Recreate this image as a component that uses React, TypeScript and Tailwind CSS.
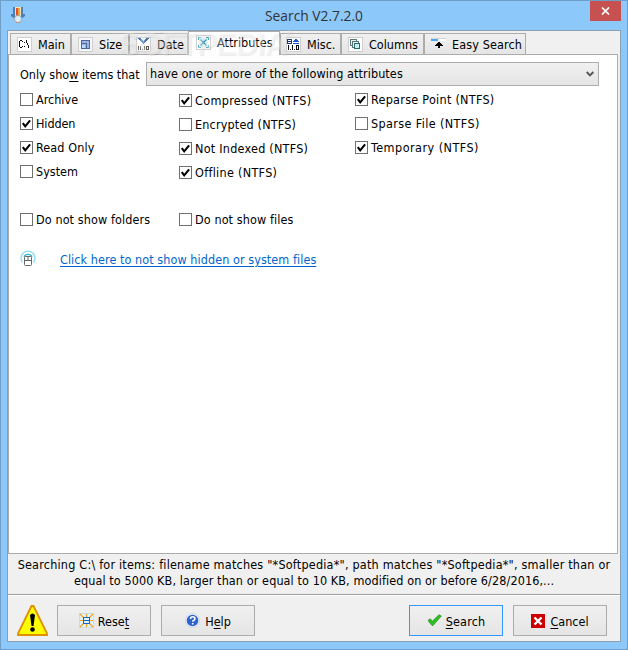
import type { ReactNode } from "react";
import clsx from "clsx";

const PromptIcon = () => (
  <svg width="15" height="15" viewBox="0 0 15 15" shapeRendering="crispEdges">
    <rect x=".5" y=".5" width="14" height="14" fill="#fff" stroke="#cfcfcf" />
    <path d="M3 3h2v1H3zM5 4h1v1H5zM2 4h1v6H2zM3 10h2v1H3zM5 9h1v1H5zM7 5h1v1H7zM7 9h1v1H7zM9 3h1v3H9zM10 6h1v2h-1zM11 8h1v3h-1z" fill="#111" />
  </svg>
);

const SizeIcon = () => (
  <svg width="15" height="15" viewBox="0 0 15 15" shapeRendering="crispEdges">
    <rect x=".5" y=".5" width="14" height="14" fill="#f4f8fc" stroke="#cfcfcf" />
    <rect x="3.500" y="3.500" width="8" height="8" fill="#9fb5e0" stroke="#4a649f" />
    <path d="M4 6.500h4.500V11" fill="none" stroke="#4a649f" />
    <rect x="4" y="8" width="3" height="3" fill="#b8dcff" />
  </svg>
);

const DateIcon = () => (
  <svg width="15" height="15" viewBox="0 0 15 15" shapeRendering="crispEdges">
    <rect x=".5" y=".5" width="14" height="14" fill="#fff" stroke="#cfcfcf" />
    <path d="M2 1h3l2.500 3L10 1h3L8 7H7z" fill="#3c76c0" />
    <path d="M2 9h1v4H2zM4 9h1v4H4zM6 12h1v1H6zM8 9h1v4H8zM10 9h3v4h-3z" fill="#555" />
    <path d="M11 10h1v2h-1z" fill="#fff" />
  </svg>
);

const AttributesIcon = () => (
  <svg width="15" height="15" viewBox="0 0 15 15">
    <rect x=".5" y=".5" width="14" height="14" fill="#fff" stroke="#cfcfcf" />
    <rect x="3" y="3" width="9" height="9" fill="#dff6fa" />
    <path d="M4.500 4.500l6 6M10.500 4.500l-6 6" stroke="#2b8db0" strokeWidth="1.100" />
    <path d="M2.500 5V2.500H5M10 2.500h2.500V5M12.500 10v2.500H10M5 12.500H2.500V10" fill="none" stroke="#46a9b5" />
  </svg>
);

const MiscIcon = () => (
  <svg width="15" height="15" viewBox="0 0 15 15" shapeRendering="crispEdges">
    <rect x=".5" y=".5" width="14" height="14" fill="#fff" stroke="#cfcfcf" />
    <path d="M1 2h5v5H1z" fill="#1d3c74" />
    <path d="M2 3h3v1H2zM2 5h3v1H2z" fill="#fff" />
    <path d="M7 4h1V3h1V2h2v1h1v1h1v1H7zM7 6h6v1H7z" fill="#1b57d0" />
    <path d="M2 8h1v5H2zM4 12h1v1H4zM6 8h1v5H6zM8 12h1v1H8zM10 8h3v5h-3z" fill="#111" />
    <path d="M11 9h1v3h-1z" fill="#fff" />
  </svg>
);

const ColumnsIcon = () => (
  <svg width="15" height="15" viewBox="0 0 15 15" shapeRendering="crispEdges">
    <rect x=".5" y=".5" width="14" height="14" fill="#fff" stroke="#cfcfcf" />
    <g fill="#e4f4f4" stroke="#5a7678">
      <rect x="2.500" y="2.500" width="6" height="6" />
      <rect x="4.500" y="4.500" width="6" height="6" />
      <rect x="6.500" y="6.500" width="5" height="5" fill="#c5f2f2" stroke="#286d70" />
    </g>
  </svg>
);

const EasySearchIcon = () => (
  <svg width="15" height="15" viewBox="0 0 15 15" shapeRendering="crispEdges">
    <path d="M0 1h15v1H0z" fill="#d4d4d4" />
    <path d="M0 2h7v2H0z" fill="#4aa9f0" />
    <path d="M7 2h8v2H7z" fill="#fff" />
    <path d="M7 5h2v1h1v1h1v1h1v1H9v2H7V9H4V8h1V7h1V6h1z" fill="#000" />
  </svg>
);

const TABS: { label: string; icon: ReactNode; className: string }[] = [
  { label: "Main", icon: <PromptIcon />, className: "w-[61px] pl-[6px]" },
  { label: "Size", icon: <SizeIcon />, className: "w-[58px] pl-[6px]" },
  { label: "Date", icon: <DateIcon />, className: "w-[59px] pl-[6px]" },
  { label: "Attributes", icon: <AttributesIcon />, className: "w-[92px] pl-[7px]" },
  { label: "Misc.", icon: <MiscIcon />, className: "w-[61px] pl-[5px]" },
  { label: "Columns", icon: <ColumnsIcon />, className: "w-[83px] pl-[6px]" },
  { label: "Easy Search", icon: <EasySearchIcon />, className: "w-[102px] pl-[6px] tracking-[0.12px]" },
];

const CheckItem = ({ label, checked, className }: { label: string; checked?: boolean; className?: string }) => (
  <label className="flex h-6 items-center">
    <svg width="13" height="13" viewBox="0 0 13 13" className="shrink-0">
      <rect x=".5" y=".5" width="12" height="12" fill="#fff" stroke="#707070" />
      {checked && <path d="M2.800 6.200l2.400 3.200 4.900-6" fill="none" stroke="#000" strokeWidth="2.100" />}
    </svg>
    <span className={clsx("ml-[3px] pt-[2px] whitespace-nowrap", className)}>{label}</span>
  </label>
);

const DialogButton = ({ icon, primary, children }: { icon: ReactNode; primary?: boolean; children: ReactNode }) => (
  <button
    className={clsx(
      "flex h-[31px] w-[94px] items-center justify-center border bg-linear-to-b from-[#f0f0f0] to-[#e5e5e5]",
      primary ? "border-[#3399ff]" : "border-[#acacac]"
    )}
  >
    {icon}
    <span className="pt-[4px]">{children}</span>
  </button>
);

// Underlined access key
const Key = ({ children }: { children: string }) => <span className="underline decoration-1 underline-offset-2">{children}</span>;

export default function App() {
  return (
    <div className="flex h-[650px] w-[628px] flex-col border border-[#6f9fc8] bg-[#8dc8fa] px-1.5 pb-[7px] font-['DejaVu_Sans_Condensed','DejaVu_Sans',sans-serif] text-[12.5px] text-black">
      {/* Title bar */}
      <div className="flex h-[29px] shrink-0">
        <div className="w-[31px]">
          <svg width="16" height="18" viewBox="0 0 16 18" className="mt-[5px] ml-[3px]">
            <path d="M3 1h10v7h2v2l-4 3H5L1 10V8h2z" fill="#4b7fb8" />
            <path d="M5 1h6v10H5z" fill="#f5dfb8" />
            <path d="M6 2h2v8H6z" fill="#e0522a" />
            <path d="M8 2h2v8H8z" fill="#f6a43c" />
            <circle cx="8" cy="13" r="3.600" fill="#dceefa" stroke="#9aa8b0" />
            <path d="M6 16.500h4" stroke="#c8906a" />
          </svg>
        </div>
        <h1 className="mt-1 flex-1 text-center font-['Open_Sans',sans-serif] text-[13.800px] leading-[22px] text-[#333]">Search V2.7.2.0</h1>
        <button className="flex h-5 w-[31px] items-center justify-center bg-[#c75050]">
          <svg width="9" height="8" viewBox="0 0 9 8">
            <path d="M1 .5l7 7M8 .5l-7 7" stroke="#fff" strokeWidth="1.700" />
          </svg>
        </button>
      </div>

      <div className="relative flex flex-1 flex-col border border-[#8a9fb0] bg-[#f0f0f0]">
        {/* Tab strip */}
        <div className="flex h-[23px] shrink-0 items-end pl-[2px]">
          {TABS.map(({ label, icon, className }) => (
            <div
              key={label}
              className={clsx(
                "flex shrink-0 items-center border border-b-0 border-[#acacac] whitespace-nowrap",
                label === "Attributes" ? "z-10 -mb-px h-6 bg-white pb-[3px]" : "h-[21px] bg-linear-to-b from-[#f0f0f0] to-[#e5e5e5]",
                className
              )}
            >
              {icon}
              <span className="ml-[6px] pt-[2px]">{label}</span>
            </div>
          ))}
        </div>

        {/* Attributes page */}
        <div className="mr-[2px] h-[500px] border border-[#acacac] bg-white pl-[11px]">
          <div className="mt-[7px] flex h-6 items-center">
            <span className="w-[126px] pt-[3px] whitespace-nowrap">
              Only sho<Key>w</Key> items that
            </span>
            <div className="flex h-6 w-[453px] items-center justify-between border border-[#acacac] bg-linear-to-b from-[#f0f0f0] to-[#e5e5e5] pr-1 pl-[3px]">
              <span className="tracking-[0.09px]">have one or more of the following attributes</span>
              <svg width="8" height="6" viewBox="0 0 8 6">
                <path d="M.7 1L4 4.300 7.300 1" fill="none" stroke="#555" strokeWidth="1.900" />
              </svg>
            </div>
          </div>

          <div className="mt-px flex">
            <div className="w-[159px]">
              <CheckItem label="Archive" />
              <CheckItem label="Hidden" checked className="tracking-[-0.1px]" />
              <CheckItem label="Read Only" checked className="tracking-[0.1px]" />
              <CheckItem label="System" />
            </div>
            <div className="w-[176px] pt-px">
              <CheckItem label="Compressed (NTFS)" checked className="tracking-[0.33px]" />
              <CheckItem label="Encrypted (NTFS)" className="tracking-[0.17px]" />
              <CheckItem label="Not Indexed (NTFS)" checked className="tracking-[0.24px]" />
              <CheckItem label="Offline (NTFS)" checked className="tracking-[0.3px]" />
            </div>
            <div>
              <CheckItem label="Reparse Point (NTFS)" checked className="tracking-[0.27px]" />
              <CheckItem label="Sparse File (NTFS)" className="tracking-[0.38px]" />
              <CheckItem label="Temporary (NTFS)" checked className="tracking-[0.47px]" />
            </div>
          </div>

          <div className="mt-[23px] flex">
            <div className="w-[159px]">
              <CheckItem label="Do not show folders" className="tracking-[0.1px]" />
            </div>
            <CheckItem label="Do not show files" className="tracking-[0.1px]" />
          </div>

          <div className="mt-[16px] flex h-6 items-center">
            <svg width="16" height="17" viewBox="0 0 16 17" className="-mt-px">
              <path d="M2.500 12.500a7 7 0 1 1 11 0" fill="none" stroke="#8bdcf5" strokeWidth="1.300" />
              <path d="M4 7a4.300 4.300 0 0 1 8 0" fill="none" stroke="#35add0" strokeWidth="1.300" />
              <rect x="4.500" y="6.500" width="7" height="9" rx="1" fill="#fff" stroke="#666" />
              <path d="M4 10.500h8M8 6v4.500" stroke="#666" />
            </svg>
            <a className="ml-6 pt-[2px] tracking-[0.07px] text-[#0066cc] underline underline-offset-2">Click here to not show hidden or system files</a>
          </div>
        </div>

        {/* Search summary */}
        <p className="h-[41px] border-b border-[#a0a0a0] pt-[3px] text-center leading-4">
          <span className="block tracking-[0.21px] whitespace-nowrap">Searching C:\ for items: filename matches "*Softpedia*", path matches "*Softpedia*", smaller than or</span>
          <span className="block tracking-[0.1px] whitespace-nowrap">equal to 5000 KB, larger than or equal to 10 KB, modified on or before 6/28/2016,...</span>
        </p>

        {/* Footer */}
        <div className="flex flex-1 items-start border-t border-white pt-[9px] pr-[13px] pl-[9px]">
          <svg width="31" height="31" viewBox="0 0 31 31" className="mr-[9px]">
            <path d="M14.500 1h2L30 28.500v1.500H1v-1.500z" fill="#ff0" stroke="#e09000" strokeWidth="1.800" />
            <path d="M13 10q2.500-3 5 0l-1.500 11h-2z" fill="#000" />
            <circle cx="15.500" cy="24.500" r="2.300" fill="#000" />
          </svg>
          <DialogButton
            icon={
              <svg width="15" height="15" viewBox="0 0 15 15" className="mr-1">
                <rect x=".5" y=".5" width="14" height="14" fill="#e0f4fb" stroke="#c9dde0" />
                <path d="M1 1l13 13M14 1L1 14M7.500 1v13M1 7.500h13" stroke="#f79f1e" strokeWidth="1.200" />
                <rect x="4.500" y="4.500" width="6" height="6" fill="#dff2ff" stroke="#1769c5" />
                <path d="M5 7.500h5" stroke="#1769c5" />
              </svg>
            }
          >
            Rese<Key>t</Key>
          </DialogButton>
          <div className="w-[10px]" />
          <DialogButton
            icon={
              <svg width="15" height="15" viewBox="0 0 15 15" className="mr-[5px]">
                <circle cx="7.500" cy="7.500" r="7" fill="#f2f5fc" stroke="#cbd4ea" />
                <circle cx="7.500" cy="7.500" r="5.800" fill="#2f62cb" />
                <path d="M5.500 6q0-2.200 2.200-2.200t2.200 1.900q0 1.100-1.300 1.700-.9.400-.9 1.300M7.700 10v1.500" fill="none" stroke="#fff" strokeWidth="1.600" />
              </svg>
            }
          >
            H<Key>e</Key>lp
          </DialogButton>
          <div className="flex-1" />
          <DialogButton
            primary
            icon={
              <svg width="15" height="13" viewBox="0 0 15 13" className="mr-1">
                <path d="M1 6.500l2-1.700L5.500 7 12 .8l2.300 1.200L6 11.500H5z" fill="#2fbf22" stroke="#208a1a" strokeWidth=".7" />
              </svg>
            }
          >
            <span className="tracking-[0.15px]">
              <Key>S</Key>earch
            </span>
          </DialogButton>
          <div className="w-[10px]" />
          <DialogButton
            icon={
              <svg width="14" height="14" viewBox="0 0 14 14" className="mr-[5px]">
                <rect width="14" height="14" fill="#cc0000" />
                <path d="M3.500 3.500l7 7M10.500 3.500l-7 7" stroke="#fff" strokeWidth="2.400" />
              </svg>
            }
          >
            <Key>C</Key>ancel
          </DialogButton>
        </div>

        {/* Watermark over the tabs */}
        <div className="pointer-events-none absolute top-[-2px] left-[111px] z-20 font-['Liberation_Sans',sans-serif] text-[31px] leading-8 font-bold tracking-[-1.200px] text-white/35 [text-shadow:1px_1px_1px_rgb(0_0_0/0.08)]">
          SOFTPEDIA<sup className="-top-[18px] text-[9px]">®</sup>
        </div>
      </div>
    </div>
  );
}
